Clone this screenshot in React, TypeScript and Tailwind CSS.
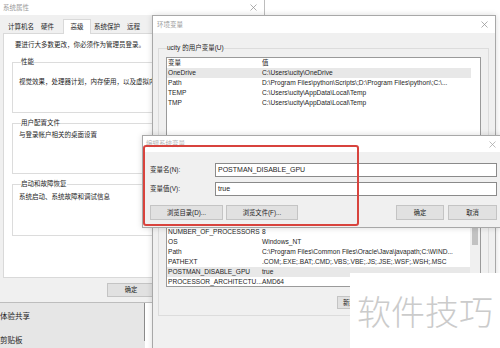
import React from "react";

function Close({ color = "#8c8c8c" }: { color?: string }) {
  return (
    <svg width="7" height="7" viewBox="0 0 7 7" className="block">
      <path d="M0.5 0.5L6.5 6.5M6.5 0.5L0.5 6.5" stroke={color} strokeWidth="0.7" />
    </svg>
  );
}

type Row = [string, string, boolean?];

const userVars: Row[] = [
  ["OneDrive", "C:\\Users\\ucity\\OneDrive", true],
  ["Path", "D:\\Program Files\\python\\Scripts\\;D:\\Program Files\\python\\;C:\\..."],
  ["TEMP", "C:\\Users\\ucity\\AppData\\Local\\Temp"],
  ["TMP", "C:\\Users\\ucity\\AppData\\Local\\Temp"],
];

const sysVars: Row[] = [
  ["NUMBER_OF_PROCESSORS", "8"],
  ["OS", "Windows_NT"],
  ["Path", "C:\\Program Files\\Common Files\\Oracle\\Java\\javapath;C:\\WIND..."],
  ["PATHEXT", ".COM;.EXE;.BAT;.CMD;.VBS;.VBE;.JS;.JSE;.WSF;.WSH;.MSC"],
  ["POSTMAN_DISABLE_GPU", "true", true],
  ["PROCESSOR_ARCHITECTU...", "AMD64"],
];

function VarRow({ row }: { row: Row }) {
  return (
    <div
      className={
        "h-[10px] flex items-center whitespace-nowrap overflow-hidden " +
        (row[2] ? "bg-[#e8e8e8]" : "")
      }
    >
      <span className="w-[95px] shrink-0 pl-[1px]">{row[0]}</span>
      <span>{row[1]}</span>
    </div>
  );
}

function Btn({ children, className = "" }: { children: React.ReactNode; className?: string }) {
  return (
    <div
      className={
        "flex items-center justify-center whitespace-nowrap overflow-hidden bg-[#e1e1e1] border border-[#c4c4c4] text-[6.3px] " +
        className
      }
    >
      {children}
    </div>
  );
}

export default function App() {
  return (
    <div className="relative w-[500px] h-[348px] overflow-hidden bg-white text-[#1e1e1e] font-['Liberation_Sans','Noto_Sans_CJK_SC',sans-serif] text-[6.6px] leading-[10px]">
      {/* settings list behind */}
      <div className="absolute left-0 top-[303px] w-[145px] h-[45px] bg-[#e6e6e6] flex flex-col">
        <div className="text-[7.5px] leading-[12px] mt-[8px]">体验共享</div>
        <div className="text-[7.5px] leading-[12px] mt-[12px]">剪贴板</div>
        <div className="absolute right-0 top-0 w-[1px] h-[38px] bg-[#8a8a8a]" />
      </div>

      {/* 系统属性 */}
      <div className="absolute left-0 top-0 w-[265px] h-[303px] bg-[#f0f0f0] border-r border-b border-[#bdbdbd] flex flex-col">
        <div className="h-[15px] bg-white flex items-center justify-between pl-[3px] pr-[7px]">
          <span className="text-[6.5px] text-[#9a9a9a]">系统属性</span>
          <Close />
        </div>
        <div className="h-[18px] flex items-end text-[6.5px]">
          <div className="ml-[3px] w-[36px] h-[13px] flex items-center justify-center">计算机名</div>
          <div className="w-[17px] h-[13px] flex items-center justify-center">硬件</div>
          <div className="ml-[7px] w-[28px] h-[15px] -mb-[1px] relative bg-white border-t border-x border-[#d9d9d9] flex items-start pt-[2px] justify-center">
            高级
          </div>
          <div className="w-[32px] h-[13px] flex items-center justify-center">系统保护</div>
          <div className="w-[21px] h-[13px] flex items-center justify-center">远程</div>
        </div>
        <div className="mx-[3px] h-[245px] bg-white border border-[#d9d9d9] pl-[11px] pr-[6px] pt-[6px] flex flex-col text-[6.5px]">
          <div className="h-[10px] leading-[10px]">要进行大多数更改，你必须作为管理员登录。</div>
          <fieldset className="mt-[7px] -ml-[3px] h-[56px] border border-[#dcdcdc] pl-[6px] pt-[10px]">
            <legend className="ml-[2px] leading-[10px]">性能</legend>
            <div className="whitespace-nowrap">视觉效果，处理器计划，内存使用，以及虚拟内存</div>
          </fieldset>
          <fieldset className="mt-[5px] -ml-[3px] h-[56px] border border-[#dcdcdc] pl-[6px] pt-[2px]">
            <legend className="ml-[2px] leading-[10px]">用户配置文件</legend>
            <div>与登录帐户相关的桌面设置</div>
          </fieldset>
          <fieldset className="mt-[5px] -ml-[3px] h-[57px] border border-[#dcdcdc] pl-[6px] pt-[3px]">
            <legend className="ml-[2px] leading-[10px]">启动和故障恢复</legend>
            <div>系统启动、系统故障和调试信息</div>
          </fieldset>
        </div>
        <div className="mt-[5px] ml-[107px] flex">
          <Btn className="w-[48px] h-[14px]">确定</Btn>
        </div>
      </div>

      {/* 环境变量 */}
      <div className="absolute left-[152px] top-[15px] w-[344px] h-[345px] bg-[#f0f0f0] border border-[#a8a8a8] shadow-[0_0_6px_rgba(0,0,0,0.15)] flex flex-col">
        <div className="h-[17px] bg-white flex items-center justify-between pl-[4px] pr-[7px]">
          <span className="text-[6.5px] text-[#9a9a9a]">环境变量</span>
          <Close />
        </div>
        <fieldset className="mt-[10px] ml-[5px] w-[331px] h-[100px] border border-[#dcdcdc] pl-[7px] pt-[4px]">
          <legend className="ml-[1px] leading-[10px] text-[6.5px]">ucity 的用户变量(U)</legend>
          <div className="w-[315px] h-[80px] bg-white border border-[#9a9a9a] overflow-hidden">
            <div className="h-[10px] flex items-center">
              <span className="w-[95px] pl-[1px] text-[6.5px]">变量</span>
              <span className="text-[6.5px]">值</span>
            </div>
            <div className="w-[304px]">
              {userVars.map((r) => (
                <VarRow key={r[0]} row={r} />
              ))}
            </div>
          </div>
        </fieldset>
        {/* system variables group; its upper part lies under the edit dialog */}
        <fieldset className="mt-[8px] ml-[5px] w-[331px] h-[165px] border border-[#dcdcdc] pl-[7px] pt-[4px]">
          <div className="w-[315px] h-[131px] bg-white border border-[#9a9a9a] overflow-hidden flex">
            <div className="flex-1 min-w-0 pt-[70px]">
              {sysVars.map((r, i) => (
                <VarRow key={i} row={r} />
              ))}
            </div>
            <div className="w-[10px] bg-[#f0f0f0] flex justify-center">
              <div className="mt-[43px] w-[6px] h-[45px] bg-[#c2c2c2]" />
            </div>
          </div>
          <div className="mt-[9px] w-[315px] flex">
            <Btn className="ml-[171px] w-[45px] h-[13px] justify-start pl-[5px]">新建</Btn>
          </div>
        </fieldset>
      </div>

      {/* 编辑系统变量 */}
      <div className="absolute left-[142px] top-[135px] w-[360px] h-[93px] bg-[#f0f0f0] border border-[#a8a8a8] shadow-[0_0_6px_rgba(0,0,0,0.15)] flex flex-col">
        <div className="h-[16px] bg-white flex items-center justify-between pl-[3px] pr-[5px]">
          <span className="text-[6.5px] text-[#b4b4b4]">编辑系统变量</span>
          <Close color="#a0a0a0" />
        </div>
        <div className="pt-[11px] pl-[7px] pr-[4px] flex flex-col">
          <div className="flex items-center h-[14px]">
            <span className="w-[65px] text-[6.5px]">变量名(N):</span>
            <div className="flex-1 h-[14px] bg-white border border-[#8a8a8a] flex items-center pl-[2px] text-[7px]">
              POSTMAN_DISABLE_GPU
            </div>
          </div>
          <div className="mt-[5px] flex items-center h-[14px]">
            <span className="w-[65px] text-[6.5px]">变量值(V):</span>
            <div className="flex-1 h-[14px] bg-white border border-[#8a8a8a] flex items-center pl-[2px] text-[7px]">
              true
            </div>
          </div>
          <div className="mt-[9px] flex items-center">
            <Btn className="w-[73px] h-[15px]">浏览目录(D)...</Btn>
            <Btn className="ml-[3px] w-[72px] h-[15px]">浏览文件(F)...</Btn>
            <div className="flex-1" />
            <Btn className="w-[48px] h-[15px]">确定</Btn>
            <Btn className="ml-[4px] w-[49px] h-[15px]">取消</Btn>
          </div>
        </div>
      </div>

      {/* red highlight */}
      <div className="absolute left-[143px] top-[145px] w-[216px] h-[81px] border-2 border-[#d8433d] rounded-[3px]" />

      {/* watermark */}
      <div className="absolute left-[350px] top-[273px] w-[150px] h-[75px] bg-white flex items-center justify-center">
        <span className="text-[34px] leading-[40px] font-light text-[#cbcbcb] font-['Noto_Sans_CJK_SC',sans-serif]">
          软件技巧
        </span>
      </div>
    </div>
  );
}
